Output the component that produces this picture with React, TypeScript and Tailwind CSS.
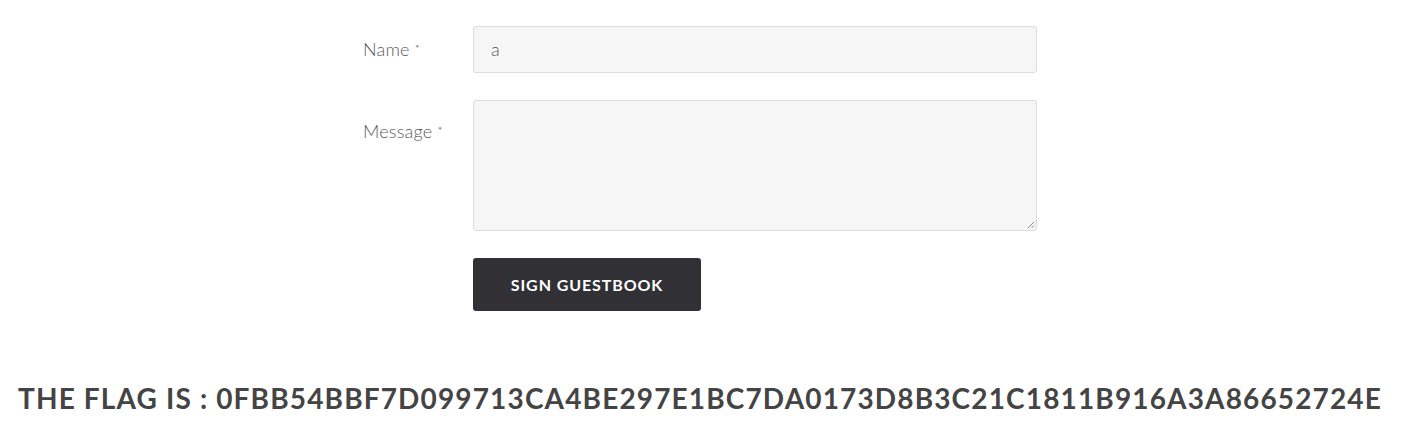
import React from "react";

export default function App() {
  return (
    <div
      className="w-[1410px] h-[447px] bg-white overflow-hidden"
      style={{ fontFamily: "Lato, 'Open Sans', sans-serif" }}
    >
      <div className="pt-[26px] flex justify-center">
        <div className="w-[674px] ml-[-10px]">
          <div className="flex">
            <label className="w-[110px] pt-[13px] text-[18px] font-light text-[#5a5a5a] leading-[20px] tracking-[0.2px]">
              Name <span className="text-[12px] align-top">*</span>
            </label>
            <div className="w-[564px] h-[47px] bg-[#f6f6f6] border border-[#dcdcdc] rounded-[3px] px-[17px] flex items-center text-[18px] font-light text-[#555]">
              a
            </div>
          </div>
          <div className="flex mt-[27px]">
            <label className="w-[110px] pt-[21px] text-[18px] font-light text-[#5a5a5a] leading-[20px] tracking-[0.2px]">
              Message <span className="text-[12px] align-top">*</span>
            </label>
            <div className="relative w-[564px] h-[131px] bg-[#f6f6f6] border border-[#dcdcdc] rounded-[3px]">
              <svg
                className="absolute right-[1px] bottom-[1px]"
                width="8"
                height="8"
                viewBox="0 0 8 8"
              >
                <line x1="1" y1="7" x2="7" y2="1" stroke="#888" strokeWidth="1" />
                <line x1="4.5" y1="7" x2="7" y2="4.5" stroke="#888" strokeWidth="1" />
              </svg>
            </div>
          </div>
          <div className="flex mt-[27px]">
            <div className="w-[110px]" />
            <button className="w-[228px] h-[53px] bg-[#313035] rounded-[3px] text-white text-[16px] font-bold tracking-[0.9px]">
              SIGN GUESTBOOK
            </button>
          </div>
        </div>
      </div>
      <div className="mt-[70px] pr-[10px] text-center text-[28px] font-bold text-[#444] leading-[34px] whitespace-nowrap tracking-[1.15px]">
        THE FLAG IS : 0FBB54BBF7D099713CA4BE297E1BC7DA0173D8B3C21C1811B916A3A86652724E
      </div>
    </div>
  );
}
